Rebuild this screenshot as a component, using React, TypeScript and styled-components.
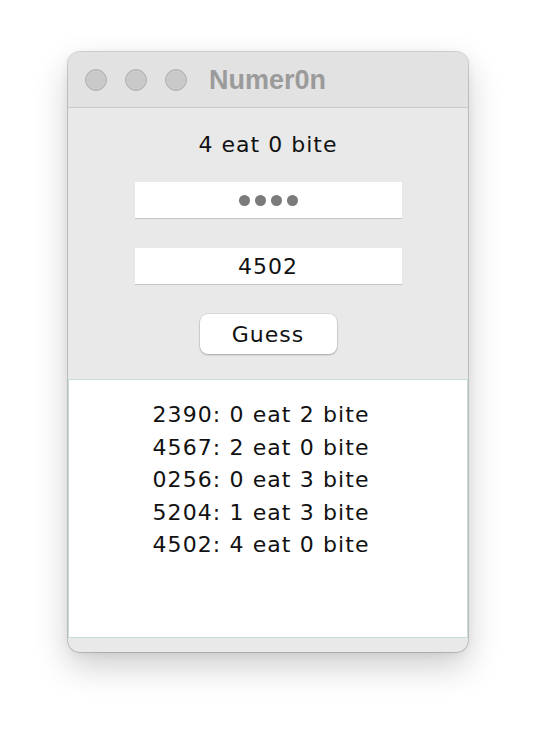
import React from "react";
import styled, { createGlobalStyle } from "styled-components";

const GlobalStyle = createGlobalStyle`
  html, body {
    margin: 0;
    padding: 0;
    background: #ffffff;
  }
  body {
    font-family: "DejaVu Sans", "Liberation Sans", sans-serif;
  }
`;

const Page = styled.div`
  width: 536px;
  height: 736px;
  padding: 52px 0 0 68px;
  box-sizing: border-box;
  background: #ffffff;
`;

const Window = styled.div`
  width: 400px;
  height: 600px;
  border-radius: 12px;
  overflow: hidden;
  background: #e9e9e9;
  box-shadow: 0 0 0 1px rgba(0, 0, 0, 0.16), 0 14px 34px rgba(0, 0, 0, 0.2),
    0 2px 8px rgba(0, 0, 0, 0.06);
  display: flex;
  flex-direction: column;
`;

const TitleBar = styled.div`
  height: 55px;
  flex: none;
  background: #e2e2e2;
  border-bottom: 1px solid #c9c9c9;
  display: flex;
  align-items: center;
  padding-left: 17px;
`;

const Lights = styled.div`
  display: flex;
  gap: 18px;
`;

const Light = styled.span`
  width: 20px;
  height: 20px;
  border-radius: 50%;
  background: #c9c9c9;
  border: 1px solid #acacac;
`;

const Title = styled.div`
  margin-left: 22px;
  font-family: "Liberation Sans", Arial, sans-serif;
  font-weight: bold;
  font-size: 27px;
  color: #9b9b9b;
  line-height: 1;
  margin-top: 1px;
`;

const Body = styled.div`
  flex: 1;
  display: flex;
  flex-direction: column;
  align-items: center;
  padding-top: 22px;
`;

const Status = styled.div`
  font-size: 22px;
  line-height: 30px;
  letter-spacing: 1px;
  color: #111;
  margin-bottom: 22px;
`;

const Field = styled.div<{ $gap: number }>`
  width: 267px;
  height: 36px;
  background: #ffffff;
  border-bottom: 1px solid #c4c4c4;
  display: flex;
  align-items: center;
  justify-content: center;
  gap: ${(p) => p.$gap}px;
  font-size: 22px;
  letter-spacing: 1px;
  color: #111;
  margin-bottom: 29px;
`;

const Dot = styled.span`
  width: 11px;
  height: 11px;
  border-radius: 50%;
  background: #7b7b7b;
`;

const GuessButton = styled.button`
  width: 137px;
  height: 40px;
  border: none;
  border-radius: 8px;
  background: #ffffff;
  box-shadow: 0 0 0 0.5px rgba(0, 0, 0, 0.12), 0 1px 2px rgba(0, 0, 0, 0.25);
  font-family: "DejaVu Sans", sans-serif;
  font-size: 22px;
  letter-spacing: 1px;
  color: #111;
  padding: 0;
  margin-bottom: 25px;
`;

const History = styled.div`
  align-self: stretch;
  height: 259px;
  box-sizing: border-box;
  background: #ffffff;
  border: 1px solid #c6dcd8;
  padding: 19px 14px 0 0;
  display: flex;
  flex-direction: column;
  align-items: center;
  margin-bottom: 15px;
`;

const HistoryLine = styled.div`
  font-size: 22px;
  line-height: 32.6px;
  letter-spacing: 1.1px;
  color: #111;
`;

const history = [
  "2390: 0 eat 2 bite",
  "4567: 2 eat 0 bite",
  "0256: 0 eat 3 bite",
  "5204: 1 eat 3 bite",
  "4502: 4 eat 0 bite",
];

export default function App() {
  return (
    <>
      <GlobalStyle />
      <Page>
        <Window>
          <TitleBar>
            <Lights>
              <Light />
              <Light />
              <Light />
            </Lights>
            <Title>Numer0n</Title>
          </TitleBar>
          <Body>
            <Status>4 eat 0 bite</Status>
            <Field $gap={5}>
              <Dot />
              <Dot />
              <Dot />
              <Dot />
            </Field>
            <Field $gap={0}>4502</Field>
            <GuessButton>Guess</GuessButton>
            <History>
              {history.map((h) => (
                <HistoryLine key={h}>{h}</HistoryLine>
              ))}
            </History>
          </Body>
        </Window>
      </Page>
    </>
  );
}
